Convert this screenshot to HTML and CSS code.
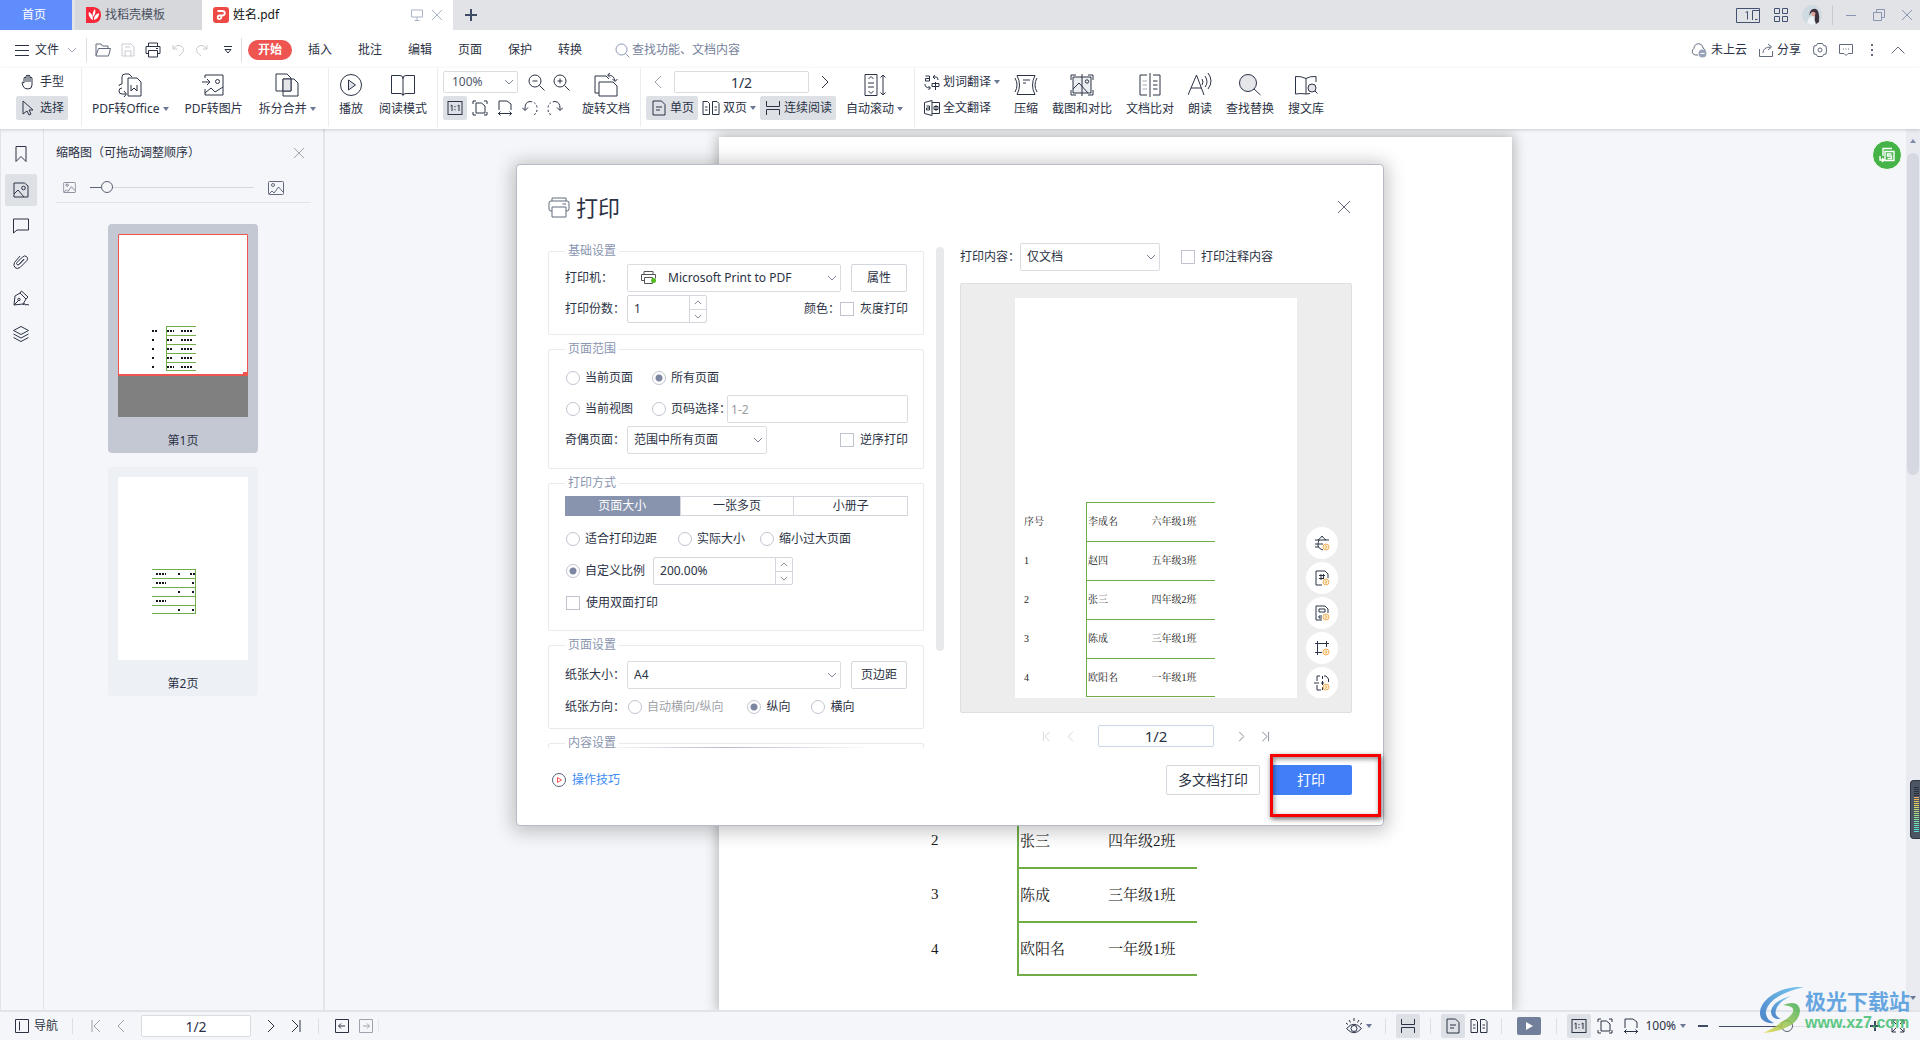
FILE: index.html
```html
<!DOCTYPE html>
<html lang="zh-CN">
<head>
<meta charset="utf-8">
<title>姓名.pdf</title>
<link rel="stylesheet" href="styles.css">
</head>
<body>
<svg class="sprite" aria-hidden="true">
  <defs>
    <symbol id="close" viewBox="0 0 12 12"><path d="M1 1l10 10M11 1L1 11"/></symbol>
    <symbol id="left" viewBox="0 0 8 14"><path d="M7 1L1 7l6 6"/></symbol>
    <symbol id="right" viewBox="0 0 8 14"><path d="M1 1l6 6-6 6"/></symbol>
    <symbol id="first" viewBox="0 0 10 14"><path d="M9 1L3 7l6 6M1 1v12"/></symbol>
    <symbol id="last" viewBox="0 0 10 14"><path d="M1 1l6 6-6 6M9 1v12"/></symbol>
    <symbol id="down" viewBox="0 0 10 6"><path d="M1 1l4 4 4-4"/></symbol>
    <symbol id="up" viewBox="0 0 10 6"><path d="M1 5l4-4 4 4"/></symbol>
    <symbol id="caret" viewBox="0 0 6 4"><path d="M0 0h6L3 4z" fill="#6b7794" stroke="none"/></symbol>
    <symbol id="actual" viewBox="0 0 16 16"><rect x="1" y="1.500" width="14" height="13"/><path d="M3.500 6l1.500-1v6M10.500 6l1.500-1v6M8 6v1.200M8 9v1.200"/></symbol>
    <symbol id="fitpage" viewBox="0 0 16 16"><path d="M4 3h5.500L13 6v7H4zM1 4V1h3M12 1h3v3M1 12v3h3M12 15h3v-3"/></symbol>
    <symbol id="fitwidth" viewBox="0 0 16 16"><path d="M2 10V1h8l4 3v6M1 13.500h14M3.500 11.500l-2 2 2 2M12.500 11.500l2 2-2 2"/></symbol>
    <symbol id="single" viewBox="0 0 16 16"><path d="M2 1h8.500L14 4.500V15H2zM5 7h6M5 10h4"/></symbol>
    <symbol id="double" viewBox="0 0 18 16"><path d="M1 1.500h4.500l2 2v11H1zM10.500 1.500H15l2 2v11h-6.500zM3 7h2.500M3 10h2.500M12.500 7H15M12.500 10H15"/></symbol>
    <symbol id="continuous" viewBox="0 0 16 16"><path d="M1.500 1v5.500h13V1M1.500 15V9.500h13V15"/></symbol>
    <symbol id="printer" viewBox="0 0 22 22"><path d="M4 5V2h14v3M4 15H3a2 2 0 0 1-2-2V7a2 2 0 0 1 2-2h16a2 2 0 0 1 2 2v6a2 2 0 0 1-2 2h-1M4 11h14v10H4zM14.500 8H18"/></symbol>
    <symbol id="picture" viewBox="0 0 16 14"><rect x=".5" y=".5" width="15" height="13" rx="1"/><circle cx="5" cy="4" r="1.500"/><path d="M1 13l3-3 2 2 4.500-6L15 11"/></symbol>
    <symbol id="coin" viewBox="0 0 8 8"><circle cx="4" cy="4" r="3" stroke="#f2b35c" fill="#fdecd0"/><path d="M3 2.500l2 1.500-2 1.500" stroke="#f2b35c"/></symbol>
  </defs>
</svg>

<header class="titlebar">
  <button class="tab tab-home">首页</button>
  <button class="tab tab-template">
    <svg width="15" height="16" viewBox="0 0 15 16"><path d="M0 0h8q7 1 7 8t-7 8H0z" fill="#f8283a"/><path d="M7 13C3 11 2 7 3 5c2 1 4 3 4 8zM7 10c-1-3 0-6 2-8 1 3 0 6-2 8zM8 13c0-4 2-6 5-7 0 4-2 6-5 7z" fill="#fff"/></svg>
    <span>找稻壳模板</span>
  </button>
  <div class="tab tab-file">
    <svg width="16" height="16" viewBox="0 0 16 16"><rect width="16" height="16" rx="3" fill="#ee4a45"/><path d="M4.500 4h4.500a2.500 2 0 0 1 0 4.500H6.500a1.800 1.800 0 1 0 1.800 2V8" fill="none" stroke="#fff" stroke-width="1.800"/></svg>
    <span class="grow">姓名.pdf</span>
    <svg class="ic muted" width="12" height="12" viewBox="0 0 12 12"><path d="M.5 1h11v7H.5zM6 8v3M3.500 11.500h5"/></svg>
    <button class="plain" aria-label="关闭标签"><svg class="ic muted" width="12" height="12"><use href="#close"/></svg></button>
  </div>
  <button class="plain tab-add" aria-label="新建"><svg class="ic bold" width="12" height="12" viewBox="0 0 12 12"><path d="M6 0v12M0 6h12"/></svg></button>
  <div class="window-tools">
    <button class="plain" aria-label="单屏"><svg class="ic slate" width="24" height="15" viewBox="0 0 24 15"><path d="M.5.500h23v14H.5zM23 2.500h-6.500v9.500M19 11.500h2.500M9.500 4.500l2-1v8"/></svg></button>
    <button class="plain" aria-label="应用"><svg class="ic slate" width="14" height="14" viewBox="0 0 14 14"><path d="M.5.5h5v5h-5zM8.500.5h5v5h-5zM.5 8.500h5v5h-5zM8.500 8.500h5v5h-5z"/></svg></button>
    <svg class="avatar" width="20" height="20" viewBox="0 0 20 20"><circle cx="10" cy="10" r="10" fill="#cfdbe2"/><path d="M5 18q1-6 6-7l2 8q-4 2-8-1z" fill="#eef3f6"/><path d="M8 7q2-4 6-3 4 2 3 13l-3 2q-2-4-1-8l-2-4q-2 0-4 4z" fill="#40323c"/><path d="M9.500 7.500q3-2 4 1l-1 3-3-1z" fill="#dba295"/></svg>
    <span class="vline"></span>
    <button class="plain" aria-label="最小化"><svg class="ic muted2" width="12" height="12" viewBox="0 0 12 12"><path d="M1 6.500h10"/></svg></button>
    <button class="plain" aria-label="还原"><svg class="ic muted2" width="12" height="12" viewBox="0 0 12 12"><path d="M3.500 3.500v-3h8v8h-3M.5 3.500h8v8h-8z"/></svg></button>
    <button class="plain" aria-label="关闭"><svg class="ic muted2" width="12" height="12"><use href="#close"/></svg></button>
  </div>
</header>

<nav class="menubar">
  <button class="plain file-menu">
    <svg class="ic" width="14" height="12" viewBox="0 0 14 12"><path d="M0 1.500h14M0 6.500h14M0 11.500h14"/></svg>
    <span>文件</span>
    <svg class="ic muted" width="10" height="6"><use href="#down"/></svg>
  </button>
  <span class="vline"></span>
  <div class="quick">
    <button class="plain" aria-label="打开"><svg class="ic grey" width="16" height="14" viewBox="0 0 16 14"><path d="M1 12.500V1h5l1.500 2H13v2.500M1 12.500l2.500-7H15.500l-2 7.500H1z"/></svg></button>
    <button class="plain" aria-label="保存"><svg class="ic pale" width="14" height="14" viewBox="0 0 14 14"><path d="M1 1h9l3 3v9H1zM4 13V8h6v5M4 4h5"/></svg></button>
    <button class="plain" aria-label="打印"><svg class="ic" width="16" height="16" viewBox="0 0 16 16"><path d="M3.500 4V1h9v3M3.500 11.500H1v-7h14v7h-2.500M3.500 8.500h9V15h-9zM11 6.500h2"/></svg></button>
    <button class="plain" aria-label="撤销"><svg class="ic pale" width="14" height="14" viewBox="0 0 14 14"><path d="M2 2v4h4M2 6q4-5 8-3t2 6l-4 4"/></svg></button>
    <button class="plain" aria-label="重做"><svg class="ic pale" width="14" height="14" viewBox="0 0 14 14"><path d="M12 2v4H8M12 6Q8 1 4 3T2 9l4 4"/></svg></button>
    <button class="plain customize" aria-label="自定义"><svg class="ic" width="10" height="8" viewBox="0 0 10 8"><path d="M1 .5h8M2 3.500h6L5 7z"/></svg></button>
  </div>
  <span class="vline"></span>
  <button class="plain menu-tab is-current">开始</button>
  <button class="plain menu-tab">插入</button>
  <button class="plain menu-tab">批注</button>
  <button class="plain menu-tab">编辑</button>
  <button class="plain menu-tab">页面</button>
  <button class="plain menu-tab">保护</button>
  <button class="plain menu-tab">转换</button>
  <label class="search">
    <svg class="ic muted2" width="15" height="15" viewBox="0 0 15 15"><circle cx="6.500" cy="6.500" r="5.500"/><path d="M10.500 10.500l4 4"/></svg>
    <input type="text" placeholder="查找功能、文档内容" aria-label="查找功能">
  </label>
  <div class="menu-right">
    <button class="plain pair"><svg class="ic grey" width="16" height="15" viewBox="0 0 16 15"><path d="M7 12H4.500A3.500 3.500 0 0 1 3 5.500 4.500 4.500 0 0 1 12 5q2 1 2 3"/><circle cx="11.500" cy="10.500" r="4" fill="#99a3ba" stroke="none"/><path d="M9.500 10.500h4" stroke="#fff"/></svg><span>未上云</span></button>
    <button class="plain pair"><svg class="ic grey" width="14" height="14" viewBox="0 0 14 14"><path d="M.5 6v7.500h13V8M4 10q0-6 8-6M9 1l3.500 3L9 7"/></svg><span>分享</span></button>
    <button class="plain" aria-label="设置"><svg class="ic grey" width="14" height="14" viewBox="0 0 14 14"><path d="M4.500.5h5l1 2 2.500.5.5 4-.5 4-2.500.5-1 2h-5l-1-2L1 11 .5 7 1 3l2.500-.5z"/><circle cx="7" cy="7" r="2"/></svg></button>
    <button class="plain" aria-label="反馈"><svg class="ic grey" width="14" height="12" viewBox="0 0 14 12"><path d="M.5.5h13v9H9l-2 2-2-2H.5zM4 5h1M6.500 5h1M9 5h1"/></svg></button>
    <button class="plain" aria-label="更多"><svg width="4" height="12" viewBox="0 0 4 12" fill="#646b7c"><path d="M1 0h2v2H1zM1 5h2v2H1zM1 10h2v2H1z"/></svg></button>
    <button class="plain" aria-label="收起"><svg class="ic grey" width="14" height="8" viewBox="0 0 14 8"><path d="M.5 7.500L7 1l6.500 6.500"/></svg></button>
  </div>
</nav>

<div class="ribbon">
  <div class="group g-mode">
    <div class="stack">
      <button class="plain small"><svg class="ic" width="14" height="16" viewBox="0 0 14 16"><path d="M3 9V4q1-1.500 2 0V2q1-1.500 2 0v-.5q1-1 2 .5v1.500q1-1 2 .5v7q0 4-4 4t-5-3L1 9q0-1.500 2 0zM5 4v4M7 2v6M9 3v5"/></svg><span>手型</span></button>
      <button class="plain small is-on"><svg class="ic" width="14" height="16" viewBox="0 0 14 16"><path d="M2 1l10 9H8l2 4-2 1-2-4-4 3z"/></svg><span>选择</span></button>
    </div>
  </div>
  <div class="group g-convert">
    <button class="plain tool"><svg class="ic" width="24" height="24" viewBox="0 0 24 24"><path d="M10 5h9l4 4v14H10zM4 11V4q0-3 3-3h4l3 3M4 15q-3 0-3 3t3 3h4M6 18l2.500 3L6 24M1 13q0-2 3-2"/><path d="M13 12v6l3-3 3 3v-6"/></svg><span class="cap">PDF转Office<svg width="6" height="4"><use href="#caret"/></svg></span></button>
    <button class="plain tool"><svg class="ic" width="24" height="24" viewBox="0 0 24 24"><path d="M3 5V2h18v20H3v-6M0 9h8M5 6l3 3-3 3M3 20l6-5 4 4 8-5"/><circle cx="15.500" cy="8.500" r="2"/></svg><span class="cap">PDF转图片</span></button>
    <button class="plain tool"><svg class="ic" width="24" height="24" viewBox="0 0 24 24"><path d="M1 1h11l4 4v13H1zM8 6h11l4 4v13H8z"/><path d="M8 6h8v12H8z" fill="#e4e6ea"/></svg><span class="cap">拆分合并<svg width="6" height="4"><use href="#caret"/></svg></span></button>
  </div>
  <div class="group g-read">
    <button class="plain tool"><svg class="ic" width="24" height="24" viewBox="0 0 24 24"><circle cx="12" cy="12" r="10.500"/><path d="M9.500 7l7 5-7 5z" fill="#dfe2e8"/></svg><span class="cap">播放</span></button>
    <button class="plain tool"><svg class="ic" width="24" height="24" viewBox="0 0 24 24"><path d="M.5 2.500H9q3 0 3 3 0-3 3-3h8.500v18H15q-3 0-3 2 0-2-3-2H.5zM12 5v17"/></svg><span class="cap">阅读模式</span></button>
  </div>
  <div class="group g-zoom">
    <div class="stack">
      <div class="zoom-top">
        <select class="box zoom-select" aria-label="缩放比例"><option>100%</option></select>
        <button class="plain" aria-label="缩小"><svg class="ic" width="17" height="17" viewBox="0 0 17 17"><circle cx="7" cy="7" r="6"/><path d="M11.500 11.500l5 5M4.500 7h5"/></svg></button>
        <button class="plain" aria-label="放大"><svg class="ic" width="17" height="17" viewBox="0 0 17 17"><circle cx="7" cy="7" r="6"/><path d="M11.500 11.500l5 5M4.500 7h5M7 4.500v5"/></svg></button>
      </div>
      <div class="zoom-bottom">
        <button class="plain square is-on" aria-label="实际大小"><svg class="ic" width="16" height="16"><use href="#actual"/></svg></button>
        <button class="plain square" aria-label="适合页面"><svg class="ic" width="16" height="16"><use href="#fitpage"/></svg></button>
        <button class="plain square" aria-label="适合宽度"><svg class="ic" width="16" height="16"><use href="#fitwidth"/></svg></button>
        <button class="plain square" aria-label="向左旋转"><svg class="ic" width="16" height="16" viewBox="0 0 16 16"><path d="M3 10V8q0-6 5-6.500"/><path d="M8 1.500q7 .5 7 7t-4 6" stroke-dasharray="2 2"/><path d="M0 7.500l3 3 3-3"/></svg></button>
        <button class="plain square" aria-label="向右旋转"><svg class="ic" width="16" height="16" viewBox="0 0 16 16"><path d="M13 10V8q0-6-5-6.500"/><path d="M8 1.500q-7 .5-7 7t4 6" stroke-dasharray="2 2"/><path d="M10 7.500l3 3 3-3"/></svg></button>
      </div>
    </div>
    <button class="plain tool"><svg class="ic" width="24" height="24" viewBox="0 0 24 24"><path d="M5 20H1V3h11l3 3M5 9h14l4 4v10H5zM14 2q6 0 7 6M16 0l-2.500 2L16 4.500M18.500 6l2.500 2.500L23.500 6"/></svg><span class="cap">旋转文档</span></button>
  </div>
  <div class="group g-view">
    <div class="stack">
      <div class="pager">
        <button class="plain" aria-label="上一页"><svg class="ic light" width="8" height="14"><use href="#left"/></svg></button>
        <input class="box" type="text" value="1/2" aria-label="页码">
        <button class="plain" aria-label="下一页"><svg class="ic" width="8" height="14"><use href="#right"/></svg></button>
      </div>
      <div class="view-modes">
        <button class="plain small is-on"><svg class="ic" width="16" height="16"><use href="#single"/></svg><span>单页</span></button>
        <button class="plain small bare"><svg class="ic" width="18" height="16"><use href="#double"/></svg><span>双页</span><svg width="6" height="4"><use href="#caret"/></svg></button>
        <button class="plain small is-on"><svg class="ic" width="16" height="16"><use href="#continuous"/></svg><span>连续阅读</span></button>
      </div>
    </div>
    <button class="plain tool"><svg class="ic" width="24" height="24" viewBox="0 0 24 24"><path d="M2 1.500h12v21H2zM5.500 6L8 3.500 10.500 6M5.500 18L8 20.500l2.500-2.500M5 10h6M5 14h6M20 2v20M17.500 4.500L20 2l2.500 2.500M17.500 19.500L20 22l2.500-2.500"/></svg><span class="cap">自动滚动<svg width="6" height="4"><use href="#caret"/></svg></span></button>
  </div>
  <div class="group g-more">
    <div class="stack">
      <button class="plain small bare"><svg class="ic" width="16" height="16" viewBox="0 0 16 16"><path d="M1.500 2h4v5h-4V4.500h4M8 12.500h7v-3H8v3M11.500 8v8M9 3h3q2 0 2 3M11 1L9 3l2 2M1 10q0 4 5 4M4.500 12L6.500 14l-2 2"/></svg><span>划词翻译</span><svg width="6" height="4"><use href="#caret"/></svg></button>
      <button class="plain small bare"><svg class="ic" width="16" height="16" viewBox="0 0 16 16"><path d="M.5 2.500L8 .5v15l-7.500-2zM8 2.500h7.500v11H8M2.500 6H5.500v4h-3V8h3M10 6.500h4v3h-4zM12 5v6"/></svg><span>全文翻译</span></button>
    </div>
    <button class="plain tool"><svg class="ic" width="24" height="24" viewBox="0 0 24 24"><path d="M3 2.500h18q-5 9.500 0 19H3q5-9.500 0-19zM9 7h7M9 10h3M1 5q4 7 0 14M23 5q-4 7 0 14"/></svg><span class="cap">压缩</span></button>
    <button class="plain tool"><svg class="ic" width="24" height="24" viewBox="0 0 24 24"><path d="M3 4h18v16H3z" fill="#eceef1"/><path d="M1 7V2h5M18 2h5v5M1 17v5h5M18 22h5v-5M12 1v22M3 16l6-6 9 10"/><circle cx="17" cy="8.500" r="1.700"/></svg><span class="cap">截图和对比</span></button>
    <button class="plain tool"><svg class="ic" width="24" height="24" viewBox="0 0 24 24"><path d="M9 2H2v20h7M15 2h7v20h-7M12 0v24M15 8h4.500M15 12h4.500M15 16h4.500"/><path d="M4.500 8H9M4.500 12H9M4.500 16H9" stroke="#a6abb6"/></svg><span class="cap">文档比对</span></button>
    <button class="plain tool"><svg class="ic" width="24" height="24" viewBox="0 0 24 24"><path d="M0 22L8.500 2 16 22M3 15h10.500M14 6q2 3 0 6M17 3q4 6 0 11M20 0q6 8 0 16"/></svg><span class="cap">朗读</span></button>
    <button class="plain tool"><svg class="ic" width="24" height="24" viewBox="0 0 24 24"><circle cx="10" cy="10" r="8.500" fill="#e4e6ea"/><path d="M16 16l6.500 6"/></svg><span class="cap">查找替换</span></button>
    <button class="plain tool"><svg class="ic" width="24" height="24" viewBox="0 0 24 24"><path d="M12 21q-5-1-10.500 0V3.500Q7 3 12 5.500zM12 5.500Q16 3 22 3.500V9M12 21l4-.5"/><circle cx="18" cy="15" r="4" fill="#e4e6ea"/><path d="M21 18l2.500 2.500"/></svg><span class="cap">搜文库</span></button>
  </div>
</div>

<main class="workspace">
  <aside class="rail">
    <button class="plain rail-btn" aria-label="书签"><svg class="ic" width="16" height="16" viewBox="0 0 16 16"><path d="M3 .5h10v15l-5-5-5 5z"/></svg></button>
    <button class="plain rail-btn is-on" aria-label="缩略图"><svg class="ic" width="16" height="16" viewBox="0 0 16 16"><path d="M1 1h10.500L15 4v11H1zM1 12l4-4 6 7"/><circle cx="10.500" cy="6" r="1.800"/></svg></button>
    <button class="plain rail-btn" aria-label="批注"><svg class="ic" width="16" height="16" viewBox="0 0 16 16"><path d="M.5 1h15v11H4l-3.500 3z"/></svg></button>
    <button class="plain rail-btn" aria-label="附件"><svg class="ic" width="16" height="16" viewBox="0 0 16 16"><path d="M11 5l-5 5.500q-1 1-2 0t0-2L9.500 3q2-2 4-.5t.5 4L7 13.500q-3 2-5 0t-.5-5L7 2M6 10.500l5-5"/></svg></button>
    <button class="plain rail-btn" aria-label="签名"><svg class="ic" width="16" height="16" viewBox="0 0 16 16"><path d="M7 3l6 6-3 5-9 1L2 6zM7 3l1.500-2L15 7l-2 2M1 15l4-4M10 15q2-3 2 0 2-1 4 0"/><circle cx="6" cy="9.500" r="1.200"/></svg></button>
    <button class="plain rail-btn" aria-label="图层"><svg class="ic" width="16" height="16" viewBox="0 0 16 16"><path d="M8 .5l7.500 4L8 8.500.5 4.500zM.5 8L8 12l7.500-4M.5 11.500l7.500 4 7.500-4"/></svg></button>
  </aside>

  <aside class="panel">
    <div class="panel-head"><span>缩略图（可拖动调整顺序）</span><button class="plain" aria-label="关闭面板"><svg class="ic light" width="12" height="12"><use href="#close"/></svg></button></div>
    <div class="panel-size">
      <svg class="ic grey" width="13" height="11" viewBox="0 0 16 14"><use href="#picture"/></svg>
      <input class="thumb-range" type="range" min="0" max="100" value="7" aria-label="缩略图大小">
      <svg class="ic grey" width="16" height="14"><use href="#picture"/></svg>
    </div>
    <figure class="thumb is-current">
      <svg width="130" height="183" viewBox="0 0 130 183"><path d="M0 142h130v41H0z" fill="#808080"/><path d="M0 0h130v142H0z" fill="#fff"/><path d="M48.500 92v44M48 92.500h30M48 101.500h30M48 110.500h30M48 119.500h30M48 128.500h30M48 136.500h30" stroke="#70ad47"/><path d="M34 97h5M49 97h7M63 97h11M34 106h2M49 106h5M63 106h11M34 115h2M49 115h5M63 115h11M34 124h2M49 124h5M63 124h11M34 133h2M49 133h7M63 133h11" stroke="#15151f" stroke-width="2" stroke-dasharray="2 1"/><path d="M.5.5h129v141H.5z" fill="none" stroke="#ee5450"/><path d="M0 140h125v-2h5v4H0z" fill="#ee5450"/></svg>
      <figcaption>第1页</figcaption>
    </figure>
    <figure class="thumb">
      <svg width="130" height="183" viewBox="0 0 130 183"><path d="M0 0h130v183H0z" fill="#fff"/><path d="M77.500 92v45M34 92.500h44M34 101.500h44M34 110.500h44M34 119.500h44M34 128.500h44M34 136.500h44" stroke="#70ad47"/><path d="M38 97h10M60 97h3M72 97h5M38 106h10M74 106h3M60 115h3M74 115h3M38 124h10M60 133h3M74 133h3" stroke="#15151f" stroke-width="2" stroke-dasharray="2 1"/></svg>
      <figcaption>第2页</figcaption>
    </figure>
  </aside>

  <section class="canvas">
    <article class="page">
      <table class="roster">
        <tr><td>序号</td><td>李成名</td><td>六年级1班</td></tr>
        <tr><td>1</td><td>赵四</td><td>五年级3班</td></tr>
        <tr><td>2</td><td>张三</td><td>四年级2班</td></tr>
        <tr><td>3</td><td>陈成</td><td>三年级1班</td></tr>
        <tr><td>4</td><td>欧阳名</td><td>一年级1班</td></tr>
      </table>
    </article>
    <button class="plain float-btn" aria-label="转换为表格"><svg width="16" height="16" viewBox="0 0 16 16" fill="none" stroke="#fff" stroke-width="1.400"><path d="M4 9V1.500h9M6 4.500h9v9H6zM1 9v4h3M3 11l2 2-2 2M12.500 7h-4v2h4v2.500h-4"/></svg></button>
  </section>
  <div class="scroll"><svg width="6" height="4" viewBox="0 0 6 4"><path d="M0 4l3-4 3 4z" fill="#7d8bab"/></svg><span class="scroll-thumb"></span><svg class="scroll-end" width="6" height="4"><use href="#caret"/></svg></div>
</main>

<footer class="status">
  <button class="plain pair"><svg class="ic" width="14" height="14" viewBox="0 0 14 14"><path d="M.5.5h13v13H.5zM4.500 2.500v9"/></svg><span>导航</span></button>
  <span class="vline"></span>
  <div class="status-pages">
    <button class="plain" aria-label="首页"><svg class="ic light" width="10" height="14"><use href="#first"/></svg></button>
    <button class="plain" aria-label="上一页"><svg class="ic light" width="8" height="14"><use href="#left"/></svg></button>
    <input class="box" type="text" value="1/2" aria-label="当前页">
    <button class="plain" aria-label="下一页"><svg class="ic" width="8" height="14"><use href="#right"/></svg></button>
    <button class="plain" aria-label="末页"><svg class="ic" width="10" height="14"><use href="#last"/></svg></button>
  </div>
  <span class="vline"></span>
  <div class="status-history">
    <button class="plain" aria-label="后退"><svg class="ic" width="14" height="14" viewBox="0 0 14 14"><path d="M.5.5h13v13H.5zM10 7H4M6 4.500L3.500 7 6 9.500"/></svg></button>
    <button class="plain" aria-label="前进"><svg class="ic light" width="14" height="14" viewBox="0 0 14 14"><path d="M.5.5h13v13H.5zM4 7h6M8 4.500L10.500 7 8 9.500"/></svg></button>
  </div>
  <div class="status-right">
    <button class="plain eye" aria-label="护眼模式"><svg class="ic" width="16" height="16" viewBox="0 0 16 16"><path d="M.5 10.500Q8 2 15.500 10.500 8 19 .5 10.500zM8 0v3M3 2l1.500 2.500M13 2l-1.500 2.500M0 5l2 1.500M16 5l-2 1.500"/><circle cx="8" cy="10.500" r="3"/></svg><svg width="6" height="4"><use href="#caret"/></svg></button>
    <span class="vline"></span>
    <button class="plain square is-on" aria-label="连续阅读"><svg class="ic" width="16" height="16"><use href="#continuous"/></svg></button>
    <span class="vline"></span>
    <div class="status-set">
      <button class="plain square is-on" aria-label="单页"><svg class="ic" width="16" height="16"><use href="#single"/></svg></button>
      <button class="plain square" aria-label="双页"><svg class="ic" width="18" height="16"><use href="#double"/></svg></button>
    </div>
    <span class="vline"></span>
    <button class="plain play" aria-label="播放"><svg width="7" height="8" viewBox="0 0 7 8"><path d="M0 0l7 4-7 4z" fill="#fff"/></svg></button>
    <span class="vline"></span>
    <div class="status-set">
      <button class="plain square is-on" aria-label="实际大小"><svg class="ic" width="16" height="16"><use href="#actual"/></svg></button>
      <button class="plain square" aria-label="适合页面"><svg class="ic" width="16" height="16"><use href="#fitpage"/></svg></button>
      <button class="plain square" aria-label="适合宽度"><svg class="ic" width="16" height="16"><use href="#fitwidth"/></svg></button>
    </div>
    <button class="plain percent">100%<svg width="6" height="4"><use href="#caret"/></svg></button>
    <button class="plain" aria-label="缩小"><svg class="ic bold" width="10" height="10" viewBox="0 0 10 10"><path d="M0 5h10"/></svg></button>
    <input class="zoom-range" type="range" min="0" max="100" value="46" aria-label="缩放">
    <button class="plain zoom-plus" aria-label="放大"><svg class="ic bold" width="10" height="10" viewBox="0 0 10 10"><path d="M0 5h10M5 0v10"/></svg></button>
    <button class="plain full" aria-label="全屏"><svg class="ic" width="14" height="14" viewBox="0 0 14 14"><path d="M1 5V1h4M9 1h4v4M1 9v4h4M9 13h4V9M1 1l4 4M13 1L9 5M1 13l4-4M13 13L9 9"/></svg></button>
  </div>
</footer>

<div class="meter" aria-hidden="true"><span></span></div>

<div class="watermark">
  <svg width="46" height="46" viewBox="0 0 46 46"><defs><linearGradient id="wmBlue" x1="0" y1="1" x2="1" y2="0"><stop offset="0" stop-color="#2f6fc0"/><stop offset="1" stop-color="#5fc0ee"/></linearGradient><linearGradient id="wmGreen" x1="0" y1="1" x2="1" y2="0"><stop offset="0" stop-color="#e8d94a"/><stop offset="1" stop-color="#3fae5a"/></linearGradient></defs><path d="M45 0Q24-1 9 11-2 21 2 31q4 6 13 5-9-4-8-12Q11 8 45 0z" fill="url(#wmBlue)"/><path d="M32 9Q14 14 12 24q0 9 10 8-7-3-5-9 2-8 15-14z" fill="url(#wmBlue)"/><path d="M24 18q16-6 17 6-1 12-17 18-9 3-20 4 12-5 18-11 9-4 12-10 2-6-10-7z" fill="url(#wmGreen)"/></svg>
  <div class="watermark-text"><strong>极光下载站</strong><span>www.xz7.com</span></div>
</div>

<dialog class="print" open aria-labelledby="print-title">
  <header class="print-head">
    <svg class="ic grey" width="22" height="22"><use href="#printer"/></svg>
    <h1 id="print-title">打印</h1>
    <button class="plain" aria-label="关闭"><svg class="ic grey" width="14" height="14" viewBox="0 0 14 14"><path d="M1 1l12 12M13 1L1 13"/></svg></button>
  </header>
  <div class="print-body">
    <div class="settings">
      <form class="settings-list">
        <fieldset class="fs-basic">
          <legend>基础设置</legend>
          <div class="row"><label class="key" for="printer-name">打印机：</label><select id="printer-name" class="box wide with-printer"><option>Microsoft Print to PDF</option></select><button class="btn side" type="button">属性</button></div>
          <div class="row"><label class="key" for="copies">打印份数：</label><span class="spin spin-short"><input id="copies" type="text" value="1"><span class="spin-btns"><button class="plain" type="button" aria-label="增加"><svg class="ic grey" width="8" height="5"><use href="#up"/></svg></button><button class="plain" type="button" aria-label="减少"><svg class="ic grey" width="8" height="5"><use href="#down"/></svg></button></span></span><span class="end">颜色：</span><label class="opt"><input type="checkbox">灰度打印</label></div>
        </fieldset>
        <fieldset class="fs-range">
          <legend>页面范围</legend>
          <div class="row"><label class="opt first-opt"><input type="radio" name="range">当前页面</label><label class="opt"><input type="radio" name="range" checked>所有页面</label></div>
          <div class="row"><label class="opt first-opt"><input type="radio" name="range">当前视图</label><label class="opt"><input type="radio" name="range">页码选择：</label><input class="box pages" type="text" placeholder="1-2" aria-label="页码范围"></div>
          <div class="row"><label class="key" for="parity">奇偶页面：</label><select id="parity" class="box mid"><option>范围中所有页面</option></select><label class="opt end"><input type="checkbox">逆序打印</label></div>
        </fieldset>
        <fieldset class="fs-mode">
          <legend>打印方式</legend>
          <div class="segmented"><button class="is-current" type="button">页面大小</button><button type="button">一张多页</button><button type="button">小册子</button></div>
          <div class="row scales"><label class="opt"><input type="radio" name="scale">适合打印边距</label><label class="opt"><input type="radio" name="scale">实际大小</label><label class="opt"><input type="radio" name="scale">缩小过大页面</label></div>
          <div class="row"><label class="opt"><input type="radio" name="scale" checked>自定义比例</label><span class="spin spin-mid"><input type="text" value="200.00%" aria-label="比例"><span class="spin-btns"><button class="plain" type="button" aria-label="增加"><svg class="ic grey" width="8" height="5"><use href="#up"/></svg></button><button class="plain" type="button" aria-label="减少"><svg class="ic grey" width="8" height="5"><use href="#down"/></svg></button></span></span></div>
          <div class="row"><label class="opt"><input type="checkbox">使用双面打印</label></div>
        </fieldset>
        <fieldset class="fs-paper">
          <legend>页面设置</legend>
          <div class="row"><label class="key" for="paper">纸张大小：</label><select id="paper" class="box wide"><option>A4</option></select><button class="btn side" type="button">页边距</button></div>
          <div class="row directions"><span class="key">纸张方向：</span><label class="opt is-disabled"><input type="radio" name="dir" disabled>自动横向/纵向</label><label class="opt"><input type="radio" name="dir" checked>纵向</label><label class="opt"><input type="radio" name="dir">横向</label></div>
        </fieldset>
        <fieldset class="fs-content"><legend>内容设置</legend></fieldset>
      </form>
      <span class="settings-bar"></span>
    </div>
    <div class="preview-col">
      <div class="row"><label for="what">打印内容：</label><select id="what" class="box mid"><option>仅文档</option></select><label class="opt notes"><input type="checkbox">打印注释内容</label></div>
      <div class="preview">
        <div class="sheet">
          <table class="roster mini">
            <tr><td>序号</td><td>李成名</td><td>六年级1班</td></tr>
            <tr><td>1</td><td>赵四</td><td>五年级3班</td></tr>
            <tr><td>2</td><td>张三</td><td>四年级2班</td></tr>
            <tr><td>3</td><td>陈成</td><td>三年级1班</td></tr>
            <tr><td>4</td><td>欧阳名</td><td>一年级1班</td></tr>
          </table>
        </div>
        <div class="extras">
          <button class="plain round" aria-label="水印"><svg class="ic" width="16" height="16" viewBox="0 0 16 16"><path d="M4 5q2-1 4-4 2 3 4 4M1 5h14M1 9h8M1 12h4M5 5q-1 2-1 6 1 3 5 4"/><use href="#coin" x="8" y="8" width="8" height="8"/></svg></button>
          <button class="plain round" aria-label="页码"><svg class="ic" width="16" height="16" viewBox="0 0 16 16"><path d="M8 15H2V1h9l3 3v4M5 5.500h6M5 8.500h5M7 4v6M9.500 4v5"/><use href="#coin" x="8" y="8" width="8" height="8"/></svg></button>
          <button class="plain round" aria-label="页眉页脚"><svg class="ic" width="16" height="16" viewBox="0 0 16 16"><path d="M8 15H2V1h9l3 3v4M5 4h6v3H5zM8 11H5v2h3"/><use href="#coin" x="8" y="8" width="8" height="8"/></svg></button>
          <button class="plain round" aria-label="裁剪"><svg class="ic" width="16" height="16" viewBox="0 0 16 16"><path d="M3.500 1v14M1 3.500h14M12.500 1v6M1 12.500h7"/><use href="#coin" x="8" y="8" width="8" height="8"/></svg></button>
          <button class="plain round" aria-label="分割"><svg class="ic" width="16" height="16" viewBox="0 0 16 16"><path d="M6 1H3v5M3 10v5h4M10 1h2l2.500 3v3M8.500 1v3M8.500 6v4M8.500 12v3M0 8h5M7 8h3"/><use href="#coin" x="8" y="8" width="8" height="8"/></svg></button>
        </div>
      </div>
      <div class="preview-nav">
        <button class="plain" aria-label="首页"><svg class="ic pale" width="9" height="11" viewBox="0 0 10 14"><use href="#first"/></svg></button>
        <button class="plain" aria-label="上一页"><svg class="ic pale" width="7" height="11" viewBox="0 0 8 14"><use href="#left"/></svg></button>
        <input class="box" type="text" value="1/2" aria-label="预览页">
        <button class="plain" aria-label="下一页"><svg class="ic grey" width="7" height="11" viewBox="0 0 8 14"><use href="#right"/></svg></button>
        <button class="plain" aria-label="末页"><svg class="ic grey" width="9" height="11" viewBox="0 0 10 14"><use href="#last"/></svg></button>
      </div>
    </div>
  </div>
  <footer class="print-foot">
    <a class="tips" href="#tips"><svg width="14" height="14" viewBox="0 0 14 14" fill="none"><circle cx="7" cy="7" r="6.500" stroke="#566079"/><path d="M5.500 4.500L9.500 7l-4 2.500z" stroke="#f0504c"/></svg><span>操作技巧</span></a>
    <button class="btn multi">多文档打印</button>
    <span class="confirm"><button class="btn primary">打印</button></span>
  </footer>
</dialog>
</body>
</html>
```
FILE: styles.css
```css
:root {
  --ink: #2b3245;
  --soft: #8a95b0;
  --line: #dfe2e7;
  --bg: #f5f6f9;
  --on: #dde1e6;
  --green: #70ad47;
}

* { box-sizing: border-box; }

html, body { height: 100%; }

body {
  margin: 0;
  display: flex;
  flex-direction: column;
  overflow: hidden;
  background: var(--bg);
  color: var(--ink);
  font: 12px/16px "Noto Sans", "Noto Sans CJK SC", sans-serif;
}

input, select, button { font: inherit; color: inherit; }
svg { display: block; flex: none; }
button, label, a, span { white-space: nowrap; }

.sprite { position: absolute; width: 0; height: 0; }
.ic { fill: none; stroke: currentColor; stroke-width: 1; color: var(--ink); }
.ic.grey { color: #626a7c; }
.ic.slate { color: #445272; }
.ic.muted { color: #a9b2c6; }
.ic.muted2 { color: #8a96b3; }
.ic.light { color: #9ea3ad; }
.ic.pale { color: #c8cbd1; }
.ic.bold { color: #3f4a66; stroke-width: 2; }
.plain { border: 0; padding: 0; background: none; display: flex; align-items: center; justify-content: center; }
.vline { width: 1px; background: #dcdfe4; flex: none; }
.grow { flex: 1; }
.pair { gap: 4px; }

.box {
  appearance: none;
  border: 1px solid #d9dce1;
  border-radius: 2px;
  background: #fff;
  padding: 0 6px;
  outline: 0;
  min-width: 0;
}
select.box {
  background-image: url("data:image/svg+xml,%3Csvg xmlns='http://www.w3.org/2000/svg' width='10' height='6' fill='none' stroke='%237e8799'%3E%3Cpath d='M1 1l4 4 4-4'/%3E%3C/svg%3E");
  background-repeat: no-repeat;
  background-position: right 3px center;
}

/* title bar */
.titlebar { display: flex; height: 30px; background: #e1e3e7; flex: none; }
.tab { border: 0; display: flex; align-items: center; }
.tab-home { width: 72px; justify-content: center; background: #5f8dfb; color: #fff; padding: 0 4px 0 0; }
.tab-template { width: 127px; margin-left: 3px; padding: 0 11px; gap: 4px; background: #d7d8dc; color: #4a5060; }
.tab-file { width: 251px; padding: 0 10px 0 11px; gap: 8px; background: #fff; color: #111; }
.tab-file .grow { margin-left: -4px; }
.tab-add { margin-left: 12px; }
.window-tools { margin-left: auto; display: flex; align-items: center; gap: 14px; padding-right: 7px; }
.window-tools .vline { height: 20px; background: #c6cad1; margin: 0 -4px; }
.window-tools .vline ~ button { margin-left: 2px; }

/* menu bar */
.menubar { display: flex; align-items: center; height: 38px; padding: 2px 0 0 15px; background: #fff; flex: none; }
.menubar .vline { height: 24px; }
.file-menu { gap: 6px; margin-right: 9px; }
.file-menu svg:last-child { margin-left: 2px; }
.quick { display: flex; align-items: center; gap: 10px; padding: 0 8px; }
.customize { margin-left: 4px; }
.menu-tab { width: 50px; height: 20px; }
.menu-tab.is-current { width: 44px; margin: 0 3px 0 6px; border-radius: 10px; background: #ee5450; color: #fff; font-weight: 700; }
.search { display: flex; align-items: center; margin-left: 20px; gap: 2px; }
.search input { border: 0; padding: 0; width: 130px; outline: 0; background: none; }
.search input::placeholder { color: #76829c; }
.menu-right { margin-left: auto; display: flex; align-items: center; gap: 12px; padding-right: 15px; }
.menu-right button:nth-child(n+5) { margin-left: 5px; }

/* ribbon */
.ribbon { display: flex; height: 61px; background: #fff; flex: none; position: relative; box-shadow: 0 1px 3px rgba(60, 66, 80, .22); }
.group { display: flex; align-items: flex-start; padding-top: 2px; border-right: 1px solid #eaecef; height: 59px; }
.g-mode { width: 82px; padding-left: 16px; }
.g-mode .small { width: 52px; gap: 5px; }
.g-convert { width: 247px; padding-left: 10px; gap: 16px; }
.g-read { width: 109px; padding-left: 10px; gap: 16px; }
.g-zoom { width: 203px; padding-left: 5px; gap: 12px; }
.g-view { width: 274px; padding-left: 5px; gap: 10px; }
.g-more { border: 0; padding-left: 9px; gap: 14px; }
.stack { display: grid; grid-template-rows: 24px 24px; row-gap: 2px; justify-items: start; }
.small { height: 24px; padding: 0 4px 0 5px; gap: 3px; border-radius: 2px; }
.small.bare { padding: 0; }
.is-on { background: var(--on); }
.tool { flex-direction: column; padding-top: 3px; gap: 4px; }
.cap { display: flex; align-items: center; gap: 3px; }
.zoom-top { display: flex; align-items: center; gap: 8px; height: 24px; }
.zoom-select { width: 75px; height: 22px; padding-left: 8px; margin-right: 2px; color: #50576a; }
.zoom-bottom { display: flex; gap: 1px; }
.square { width: 24px; height: 24px; border-radius: 2px; }
.pager { display: flex; align-items: center; gap: 12px; height: 24px; padding-left: 8px; }
.pager .box { width: 135px; height: 22px; text-align: center; font-size: 14px; }
.view-modes { display: flex; gap: 4px; }

/* workspace */
.workspace { flex: 1; display: flex; min-height: 0; }
.rail { width: 44px; flex: none; padding: 9px 5px 0 4px; display: flex; flex-direction: column; gap: 4px; border: solid #e2e4ea; border-width: 0 1px; }
.rail-btn { height: 32px; width: 32px; border-radius: 2px; }
.panel { width: 281px; flex: none; border-right: 2px solid #e2e4ea; padding: 0 12px; display: flex; flex-direction: column; }
.panel-head { height: 48px; display: flex; align-items: center; justify-content: space-between; padding-right: 6px; }
.panel-size { height: 26px; display: flex; align-items: center; gap: 14px; padding: 0 27px 4px 7px; border-bottom: 1px solid #e0e2e8; }
.thumb { width: 150px; margin: 14px 0 0 52px; padding: 10px 10px 0; border-radius: 4px; background: #edf0f4; }
.thumb.is-current { background: #c4c8d3; margin-top: 21px; }
.thumb figcaption { text-align: center; padding-top: 12px; line-height: 24px; }

input[type="range"] { appearance: none; margin: 0; background: none; height: 14px; }
input[type="range"]::-webkit-slider-thumb { appearance: none; width: 12px; height: 12px; margin-top: -6px; border: 1px solid #5a6275; border-radius: 50%; background: #f5f6f9; }
.thumb-range { flex: 1; margin-left: 3px; }
.thumb-range::-webkit-slider-runnable-track { height: 1px; background: linear-gradient(90deg, #5a6275 7%, #d5d8de 7%); }
.zoom-range { width: 146px; }
.zoom-range::-webkit-slider-runnable-track { height: 1px; background: linear-gradient(90deg, #3f4a66 46%, #dadde3 46%); }

.canvas { flex: 1; position: relative; padding-top: 8px; display: flex; justify-content: center; overflow: hidden; }
.page { width: 793px; background: #fff; box-shadow: 0 0 12px 2px rgba(0, 0, 0, .26); padding: 568px 0 0 211px; }
.float-btn { position: absolute; right: 4px; top: 11px; width: 30px; height: 30px; border-radius: 50%; border: 1px solid #fff; background: #46b348; }
.scroll { width: 14px; flex: none; background: #e9ebf1; padding: 10px 1px; display: flex; flex-direction: column; align-items: center; gap: 10px; }
.scroll-thumb { width: 12px; height: 322px; border-radius: 6px; background: #d5d8e1; }
.scroll-end { margin-top: auto; }

.roster { border-spacing: 0; font: 15px/20px "Liberation Serif", "Noto Serif CJK SC", "Noto Sans CJK SC", serif; color: #1c1c22; table-layout: fixed; width: 267px; }
.roster td { padding: 0 0 0 1px; height: 54px; border-top: 2px solid var(--green); }
.roster td:first-child { width: 87px; border: 0; }
.roster td:nth-child(2) { border-left: 2px solid var(--green); }
.roster tr:last-child td:not(:first-child) { border-bottom: 2px solid var(--green); height: 55px; }

/* status bar */
.status { height: 30px; flex: none; display: flex; align-items: center; border-top: 2px solid #e0e3e8; background: var(--bg); padding: 0 15px; }
.status .vline { height: 16px; }
.status .pair { gap: 5px; margin-right: 14px; }
.status-pages { display: flex; align-items: center; gap: 16px; padding: 0 17px 0 18px; }
.status-pages .box { width: 110px; height: 22px; text-align: center; font-size: 14px; }
.status-history { display: flex; gap: 10px; padding: 0 5px 0 16px; border-right: 1px solid #e6e8ec; }
.status-right { margin-left: auto; display: flex; align-items: center; gap: 11px; }
.status-right .vline { margin: 0 -1px; }
.eye { gap: 4px; margin-right: 3px; }
.status-set { display: flex; gap: 2px; }
.play { width: 24px; height: 18px; margin: 0 5px; border-radius: 2px; background: #727f9a; }
.percent { gap: 4px; margin: 0 1px 0 -9px; }
.zoom-plus { margin-left: -6px; }

.meter { position: absolute; right: 0; top: 780px; width: 10px; height: 59px; border: 1px solid #2f3642; border-right: 0; border-radius: 4px 0 0 4px; background: #4c5564; padding: 6px 1px 6px 3px; }
.meter span { display: block; height: 100%; background: repeating-linear-gradient(transparent 0 1px, #4c5564 1px 2px), linear-gradient(#2b313c 20%, #f2a65a 22%, #e8d860 40%, #7fe0a0 75%, #50e0d8); }

.watermark { position: absolute; right: 10px; bottom: 7px; display: flex; align-items: center; pointer-events: none; opacity: .85; }
.watermark-text { display: grid; color: #4c97dc; }
.watermark strong { font-size: 21px; line-height: 26px; }
.watermark span { font: 700 16px/18px "Liberation Sans", sans-serif; color: #43c171; }

/* print dialog */
.print {
  position: absolute;
  top: 164px;
  left: calc(50% - 444px);
  right: auto;
  width: 868px;
  margin: 0;
  padding: 0 31px 30px;
  border: 1px solid #b7bbc7;
  border-radius: 4px;
  background: #fff;
  color: var(--ink);
  box-shadow: 0 2px 18px 4px rgba(0, 0, 0, .22);
}
.print-head { display: flex; align-items: center; gap: 6px; height: 78px; padding: 6px 1px 0 0; }
.print-head h1 { margin: 0; flex: 1; font-size: 22px; line-height: 30px; font-weight: 400; }
.print-body { display: grid; grid-template-columns: 1fr 392px; column-gap: 16px; }
.settings {
  height: 505px;
  display: flex;
  justify-content: space-between;
  overflow: hidden;
  background: linear-gradient(90deg, transparent 12%, #b4bacb 45%, transparent 82%) bottom / 100% 1px no-repeat;
}
.settings-list { width: 376px; display: flex; flex-direction: column; gap: 6px; }
.settings-bar { width: 8px; height: 404px; margin-top: 4px; border-radius: 4px; background: #e8e9eb; }
fieldset { margin: 0; min-width: 0; border: 1px solid #e8eaee; border-radius: 2px; padding: 5px 15px 11px 16px; flex: none; }
legend { padding: 0 3px; color: var(--soft); line-height: 16px; }
.fs-range { padding-top: 7px; padding-bottom: 14px; }
.fs-mode { padding-bottom: 13px; }
.fs-paper { padding-top: 8px; padding-bottom: 7px; }
.fs-content { height: 60px; }
.row { display: flex; align-items: center; height: 28px; }
.row + .row { margin-top: 3px; }
.fs-mode .row + .row, .fs-paper .row + .row { margin-top: 4px; }
.key { width: 62px; }
.box.wide { width: 214px; height: 28px; }
.box.mid { width: 140px; height: 28px; }
.with-printer {
  padding-left: 40px;
  background-image:
    url("data:image/svg+xml,%3Csvg xmlns='http://www.w3.org/2000/svg' width='10' height='6' fill='none' stroke='%237e8799'%3E%3Cpath d='M1 1l4 4 4-4'/%3E%3C/svg%3E"),
    url("data:image/svg+xml,%3Csvg xmlns='http://www.w3.org/2000/svg' width='16' height='14' fill='none' stroke='%23555'%3E%3Cpath d='M3 3.500v-3h9v3M3 9.500H.5v-6h14v4M3.500 6.500h8v6h-8z'/%3E%3Ccircle cx='12.500' cy='9.500' r='2.500' fill='%235b2' stroke='none'/%3E%3C/svg%3E") !important;
  background-position: right 3px center, 13px center !important;
}
.btn { border: 1px solid #d3d6dd; border-radius: 2px; background: #fff; padding: 0; }
.side { width: 56px; height: 28px; margin-left: 10px; }
.end { margin-left: auto; }
.opt { display: flex; align-items: center; gap: 5px; }
.opt.is-disabled { color: #a2a4aa; }
.opt input { appearance: none; width: 14px; height: 14px; margin: 0; border: 1px solid #bfc4cf; background: #fff; flex: none; }
.opt input[type="checkbox"] { margin-right: 1px; }
.opt input[type="radio"] { border-radius: 50%; }
.opt input[type="radio"]:checked { background: radial-gradient(circle, #7c86a0 3px, #fff 4px); }
.opt.first-opt { width: 86px; }
.fs-range .row, .fs-mode .row { padding-left: 1px; }
.fs-range .row:last-child { padding-left: 0; }
.box.pages { flex: 1; height: 28px; padding: 0 3px; margin-left: -4px; }
.pages::placeholder { color: #9b9b9b; }
.spin { display: flex; height: 28px; border: 1px solid #d3d6dd; border-radius: 2px; }
.spin input { border: 0; padding: 0 6px; min-width: 0; flex: 1; outline: 0; background: none; }
.spin-short { width: 80px; }
.spin-mid { width: 140px; margin-left: 8px; }
.spin-btns { width: 17px; display: grid; grid-template-rows: 1fr 1fr; border-left: 1px solid #d3d6dd; }
.spin-btns button + button { border-top: 1px solid #d3d6dd; }
.segmented { display: grid; grid-template-columns: 1fr 1fr 1fr; height: 20px; border: 1px solid #d3d6dd; margin-bottom: 9px; }
.segmented button { border: 0; padding: 0; background: none; line-height: 18px; }
.segmented button + button { border-left: 1px solid #d3d6dd; }
.segmented .is-current { background: #8894ae; color: #fff; margin: -1px 0 -1px -1px; }
.scales .opt + .opt { margin-left: 21px; }
.scales .opt:last-child { margin-left: 15px; }
.directions .key { width: 63px; }
.directions .opt + .opt { margin-left: 24px; }
.directions .opt:last-child { margin-left: 21px; }

.notes { margin-left: 21px; }
.preview { display: grid; grid-template-columns: 1fr 282px 1fr; height: 430px; margin-top: 12px; padding: 14px 0; background: #ededed; border: 1px solid #dddfe2; border-radius: 2px; }
.sheet { grid-column: 2; background: #fff; padding: 204px 0 0 9px; height: 400px; }
.roster.mini { font-size: 10px; line-height: 14px; width: 191px; }
.mini td { height: 39px; border-top-width: 1px; }
.mini td:first-child { width: 62px; padding: 0; }
.mini td:nth-child(2) { border-left-width: 1px; }
.roster.mini tr:last-child td:not(:first-child) { border-bottom-width: 1px; height: 39px; }
.extras { height: 171px; margin-top: 229px; padding-left: 9px; display: flex; flex-direction: column; gap: 3px; overflow: hidden; }
.round { width: 32px; height: 32px; border-radius: 50%; background: #fff; flex: none; }
.preview-nav { display: flex; justify-content: center; align-items: center; gap: 16px; margin-top: 12px; }
.preview-nav .box { width: 116px; height: 22px; margin: 0 8px; text-align: center; font-size: 15px; border-color: #ccd7e6; }
.print-foot { display: flex; align-items: center; padding-top: 17px; }
.tips { display: flex; gap: 6px; align-items: center; margin: 0 auto 0 4px; color: #3d8bf2; text-decoration: none; }
.multi { width: 94px; height: 30px; font-size: 14px; margin-right: 10px; }
.confirm { position: relative; }
.confirm::after { content: ""; position: absolute; inset: -11px -29px -22px 0; border: 3px solid #f80000; box-shadow: 1px 2px 5px rgba(0, 0, 0, .6), inset 1px 2px 5px rgba(0, 0, 0, .45); pointer-events: none; }
.primary { width: 82px; height: 30px; border: 0; background: #417ff9; color: #fff; font-size: 14px; display: block; }
```
